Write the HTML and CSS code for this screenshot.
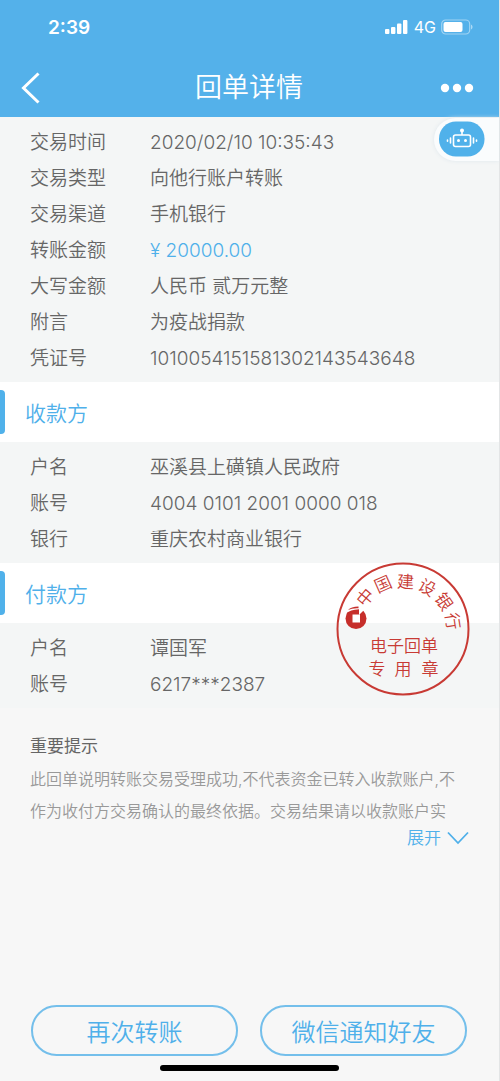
FILE: index.html
```html
<!DOCTYPE html>
<html lang="zh-CN">
<head>
<meta charset="utf-8">
<meta name="viewport" content="width=device-width, initial-scale=1">
<title>回单详情</title>
<link rel="stylesheet" href="styles.css">
</head>
<body>
<div class="app">
  <header class="header">
    <div class="status">
      <span class="status-time">2:39</span>
      <div class="status-right">
        <svg class="signal" width="24" height="16" viewBox="0 0 24 16" aria-hidden="true">
          <rect x="0" y="10" width="4.400" height="5" rx="1"/>
          <rect x="6" y="8" width="4.400" height="7" rx="1"/>
          <rect x="12" y="4.500" width="4.400" height="10.500" rx="1"/>
          <rect x="18" y="1" width="4.400" height="14" rx="1"/>
        </svg>
        <span>4G</span>
        <svg width="32" height="16" viewBox="0 0 32 16" aria-hidden="true">
          <rect x="0.700" y="1" width="28" height="14" rx="4" fill="none" stroke="#fff" stroke-opacity="0.450" stroke-width="1.200"/>
          <rect x="2.500" y="3" width="19" height="10" rx="2" fill="#fff"/>
          <path d="M30 5.500c2 .8 2 4.200 0 5z" fill="#fff" fill-opacity="0.500"/>
        </svg>
      </div>
    </div>
    <nav class="nav">
      <button class="nav-button" type="button" aria-label="返回">
        <svg width="20" height="32" viewBox="0 0 20 32" aria-hidden="true"><path d="M18.500 1.500 3.500 16l15 14.500" fill="none" stroke="#fff" stroke-width="3"/></svg>
      </button>
      <h1 class="title">回单详情</h1>
      <button class="nav-button nav-more" type="button" aria-label="更多">
        <svg width="34" height="10" viewBox="0 0 34 10" fill="#fff" aria-hidden="true"><circle cx="5" cy="5" r="4.200"/><circle cx="17" cy="5" r="4.200"/><circle cx="29" cy="5" r="4.200"/></svg>
      </button>
    </nav>
  </header>

  <main class="content">
    <div class="section">
      <dl class="details">
        <div class="row"><dt>交易时间</dt><dd>2020/02/10 10:35:43</dd></div>
        <div class="row"><dt>交易类型</dt><dd>向他行账户转账</dd></div>
        <div class="row"><dt>交易渠道</dt><dd>手机银行</dd></div>
        <div class="row"><dt>转账金额</dt><dd class="amount">¥ 20000.00</dd></div>
        <div class="row"><dt>大写金额</dt><dd>人民币 贰万元整</dd></div>
        <div class="row"><dt>附言</dt><dd>为疫战捐款</dd></div>
        <div class="row"><dt>凭证号</dt><dd>1010054151581302143543648</dd></div>
      </dl>
      <button class="assistant" type="button" aria-label="智能客服">
        <svg width="46" height="36" viewBox="0 0 46 36" aria-hidden="true">
          <rect x="0" y="0.500" width="45.500" height="35" rx="17" fill="#50b1ea"/>
          <g fill="none" stroke="#fff" stroke-width="1.600" stroke-linecap="round">
            <rect x="14.500" y="14" width="17" height="11.500" rx="2"/>
            <path d="M23 10.500v3M11.500 17v5M34.500 17v5M8.500 19v1.200M37.500 19v1.200"/>
          </g>
          <circle cx="23" cy="9.500" r="2" fill="#fff"/>
          <circle cx="19.500" cy="19.500" r="1.500" fill="#fff"/>
          <circle cx="26.500" cy="19.500" r="1.500" fill="#fff"/>
        </svg>
      </button>
    </div>

    <h2 class="heading">收款方</h2>
    <div class="section">
      <dl class="details">
        <div class="row"><dt>户名</dt><dd>巫溪县上磺镇人民政府</dd></div>
        <div class="row"><dt>账号</dt><dd>4004 0101 2001 0000 018</dd></div>
        <div class="row"><dt>银行</dt><dd>重庆农村商业银行</dd></div>
      </dl>
    </div>

    <div class="payer">
      <h2 class="heading">付款方</h2>
      <div class="section">
        <dl class="details">
          <div class="row"><dt>户名</dt><dd>谭国军</dd></div>
          <div class="row"><dt>账号</dt><dd>6217***2387</dd></div>
        </dl>
      </div>
      <svg class="stamp" width="134" height="134" viewBox="-67 -67 134 134" role="img" aria-label="中国建设银行电子回单专用章">
        <circle r="65.500" fill="none" stroke="#c83a34" stroke-width="2"/>
        <g class="stamp-text stamp-arc">
          <text transform="rotate(-50)" y="-43">中</text>
          <text transform="rotate(-24)" y="-43">国</text>
          <text transform="rotate(3)" y="-41">建</text>
          <text transform="rotate(30)" y="-42">设</text>
          <text transform="rotate(56)" y="-43">银</text>
          <text transform="rotate(81)" y="-44">行</text>
        </g>
        <g transform="translate(-47 -11)">
          <circle cx="0" cy="0.500" r="10.500" fill="#c62f2b"/>
          <path d="M-12-12H12L5.500-5.500 3-3V-6H-12Z" fill="#fff"/>
          <path d="M-3.500-3.500H4V4.500H-3.500Z" fill="#fff"/>
          <path d="M-8-8Q-5-11.500 2.500-11.500V-9.700Q-4-10-8-8ZM-9.500-4.500Q-6-8.500 3-8.800V-6Q-4-6.500-9.500-4.500Z" fill="#c62f2b"/>
        </g>
        <g class="stamp-text stamp-label">
          <text x="1" y="23">电子回单</text>
          <text x="-26" y="46">专</text>
          <text x="0" y="46">用</text>
          <text x="27" y="46">章</text>
        </g>
      </svg>
    </div>

    <section class="notice">
      <h3 class="notice-title">重要提示</h3>
      <p class="notice-text">此回单说明转账交易受理成功,不代表资金已转入收款账户,不<br>作为收付方交易确认的最终依据。交易结果请以收款账户实</p>
      <button class="expand" type="button">展开
        <svg width="22" height="14" viewBox="0 0 22 14" aria-hidden="true"><path d="M1 1.500 11 12 21 1.500" fill="none" stroke="currentColor" stroke-width="1.800"/></svg>
      </button>
    </section>
  </main>

  <footer class="footer">
    <div class="actions">
      <button class="action" type="button">再次转账</button>
      <button class="action" type="button">微信通知好友</button>
    </div>
    <div class="home-bar"></div>
  </footer>
</div>
</body>
</html>
```

FILE: styles.css
```css
* { box-sizing: border-box; }

body {
  margin: 0;
  background: #f7f7f7;
  color: #666;
  font-family: Inter, "Noto Sans CJK SC", sans-serif;
  font-weight: 350;
}

button {
  margin: 0;
  padding: 0;
  border: 0;
  background: none;
  font-family: inherit;
  font-weight: inherit;
  cursor: pointer;
}

svg { display: block; }

h1, h2, h3, p, dl, dd { margin: 0; font-weight: inherit; }

.app {
  display: flex;
  flex-direction: column;
  min-height: 100vh;
  border-right: 1px solid #e3e5e6;
}

.header { background: #54b1ea; color: #fff; }

.status {
  display: flex;
  justify-content: space-between;
  align-items: center;
  height: 54px;
  padding: 0 26px 0 48px;
}

.status-time { font-size: 19px; font-weight: 600; }

.status-right {
  display: flex;
  align-items: center;
  gap: 5px;
  font-size: 16px;
  font-weight: 400;
}

.signal { fill: #fff; }

.nav {
  display: grid;
  grid-template-columns: 64px 1fr 60px;
  align-items: center;
  height: 63px;
  padding: 4px 25px 0 20px;
}

.nav-more { justify-self: end; }

.title {
  font-size: 27px;
  line-height: 36px;
  text-align: center;
}

.content { flex: 1; }

.section {
  position: relative;
  padding: 8px 30px 5px;
  background: #f4f6f6;
}

.row {
  display: grid;
  grid-template-columns: 120px 1fr;
  font-size: 19px;
  line-height: 36px;
}

.amount { color: #4fb0ea; }

.assistant {
  position: absolute;
  top: 1px;
  right: 0;
  padding: 3px 14px 4px 5px;
  border-radius: 22px 0 0 22px;
  background: #fafcfd;
  box-shadow: 0 0 4px #dfe7ec;
}

.heading {
  display: flex;
  align-items: center;
  height: 60px;
  background: #fff;
  color: #4fb0ea;
  font-size: 21px;
}

.heading::before {
  content: "";
  width: 5px;
  height: 44px;
  margin-right: 20px;
  border-radius: 0 4px 4px 0;
  background: #50b1ea;
}

.payer { position: relative; }

.stamp {
  position: absolute;
  top: -1px;
  right: 29px;
}

.stamp-text {
  fill: #c83a34;
  font-family: "Liberation Serif", "Noto Sans CJK SC", serif;
  text-anchor: middle;
}

.stamp-arc { font-size: 17px; }
.stamp-label { font-size: 17px; }

.notice { padding: 21px 30px 0; }

.notice-title { font-size: 17px; font-weight: 400; line-height: 34px; }

.notice-text {
  color: #999;
  font-size: 16px;
  line-height: 32px;
  white-space: nowrap;
}

.expand {
  display: flex;
  align-items: center;
  gap: 6px;
  margin-left: auto;
  color: #4fb0ea;
  font-size: 17px;
  line-height: 22px;
}

.footer { padding: 0 32px 10px 31px; }

.actions {
  display: grid;
  grid-template-columns: 1fr 1fr;
  gap: 22px;
}

.action {
  height: 51px;
  border: 2px solid #74bfeb;
  border-radius: 26px;
  color: #4fb0ea;
  font-size: 24px;
}

.home-bar {
  width: 179px;
  height: 6px;
  margin: 9px auto 0;
  border-radius: 3px;
  background: #000;
}
```
